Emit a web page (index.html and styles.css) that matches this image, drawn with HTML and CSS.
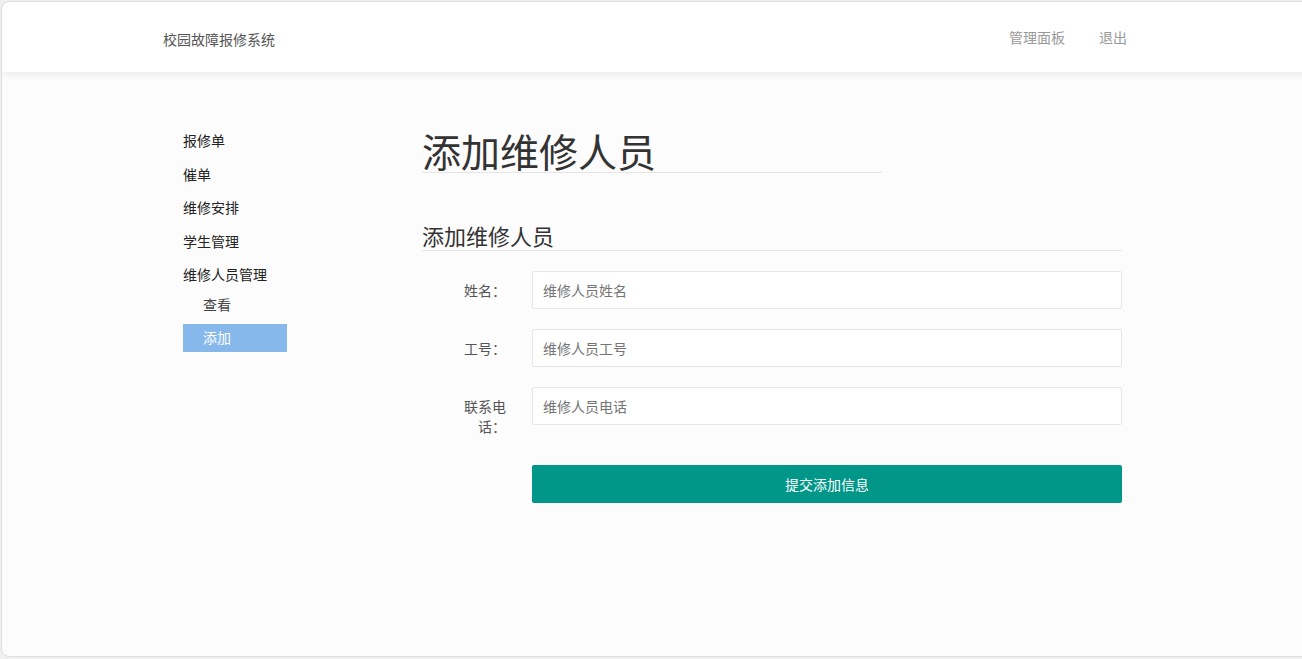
FILE: index.html
```html
<!DOCTYPE html>
<html lang="zh">
<head>
<meta charset="utf-8">
<title>校园故障报修系统</title>
<link rel="stylesheet" href="styles.css">
</head>
<body>
<div class="frame">
  <header class="header">
    <div class="brand">校园故障报修系统</div>
    <nav class="topnav">
      <a class="topnav-link">管理面板</a>
      <a class="topnav-link">退出</a>
    </nav>
  </header>
  <div class="content">
    <aside class="sidebar">
      <div class="side-item">报修单</div>
      <div class="side-item">催单</div>
      <div class="side-item">维修安排</div>
      <div class="side-item">学生管理</div>
      <div class="side-item">维修人员管理</div>
      <div class="side-sub">查看</div>
      <div class="side-sub active">添加</div>
    </aside>
    <main class="main">
      <h1 class="page-title">添加维修人员</h1>
      <h2 class="section-title">添加维修人员</h2>
      <form class="form">
        <div class="form-row">
          <label class="form-label">姓名：</label>
          <input class="form-input" type="text" placeholder="维修人员姓名">
        </div>
        <div class="form-row">
          <label class="form-label">工号：</label>
          <input class="form-input" type="text" placeholder="维修人员工号">
        </div>
        <div class="form-row">
          <label class="form-label">联系电话：</label>
          <input class="form-input" type="text" placeholder="维修人员电话">
        </div>
        <div class="form-actions">
          <button class="submit-btn" type="button">提交添加信息</button>
        </div>
      </form>
    </main>
  </div>
</div>
</body>
</html>
```

FILE: styles.css
```css
html, body {
  margin: 0;
  padding: 0;
  height: 100%;
  overflow: hidden;
  background: #f0f0f0;
  font-family: "Noto Sans CJK SC", "Noto Sans", sans-serif;
}

.frame {
  box-sizing: border-box;
  margin: 1px 0 0 1px;
  width: calc(100% + 20px);
  height: 656px;
  border: 1px solid #dedede;
  border-radius: 8px;
  background: #fcfcfc;
  overflow: hidden;
}

.header {
  height: 70px;
  background: #fff;
  border-radius: 8px 8px 0 0;
  box-shadow: 0 2px 8px rgba(0, 0, 0, 0.08);
  display: flex;
  align-items: flex-start;
  padding-left: 161px;
  position: relative;
  z-index: 1;
}

.brand {
  margin-top: 27px;
  font-size: 14px;
  line-height: 20px;
  color: #555;
  width: 846px;
}

.topnav {
  margin-top: 25px;
  display: flex;
  gap: 34px;
}

.topnav-link {
  font-size: 14px;
  line-height: 20px;
  color: #999;
  cursor: pointer;
}

.content {
  display: flex;
  align-items: flex-start;
  padding: 52px 0 0 181px;
}

.sidebar {
  width: 239px;
}

.side-item {
  height: 33.5px;
  line-height: 33.5px;
  font-size: 14px;
  color: #222;
}

.side-sub {
  width: 104px;
  box-sizing: border-box;
  height: 28px;
  line-height: 24px;
  padding-left: 20px;
  font-size: 14px;
  color: #444;
}

.side-sub.active {
  margin-top: 4px;
  line-height: 26px;
  background: #86b8eb;
  color: #fff;
}

.main {
  width: 700px;
  padding-top: 5px;
}

.page-title {
  margin: 0;
  width: 460px;
  font-size: 39px;
  font-weight: normal;
  line-height: 43px;
  color: #333;
  border-bottom: 1px solid #e5e5e5;
}

.section-title {
  margin: 50px 0 0;
  font-size: 22px;
  font-weight: normal;
  line-height: 24px;
  padding-bottom: 3px;
  color: #333;
  border-bottom: 1px solid #e5e5e5;
}

.form {
  margin-top: 20px;
}

.form-row {
  display: flex;
  align-items: flex-start;
  margin-bottom: 20px;
}

.form-label {
  box-sizing: border-box;
  width: 110px;
  flex: none;
  padding: 9px 26px 9px 34px;
  font-size: 14px;
  line-height: 20px;
  color: #555;
  text-align: right;
}

.form-input {
  box-sizing: border-box;
  flex: 1;
  height: 38px;
  margin: 0;
  padding: 0 10px;
  border: 1px solid #e6e6e6;
  border-radius: 2px;
  background: #fff;
  font-family: inherit;
  font-size: 14px;
  color: #333;
  outline: none;
}

.form-input::placeholder {
  color: #757575;
}

.form-actions {
  padding-left: 110px;
}

.submit-btn {
  display: block;
  width: 100%;
  height: 38px;
  border: none;
  border-radius: 2px;
  background: #009688;
  color: #fff;
  font-family: inherit;
  font-size: 14px;
  cursor: pointer;
}
```
